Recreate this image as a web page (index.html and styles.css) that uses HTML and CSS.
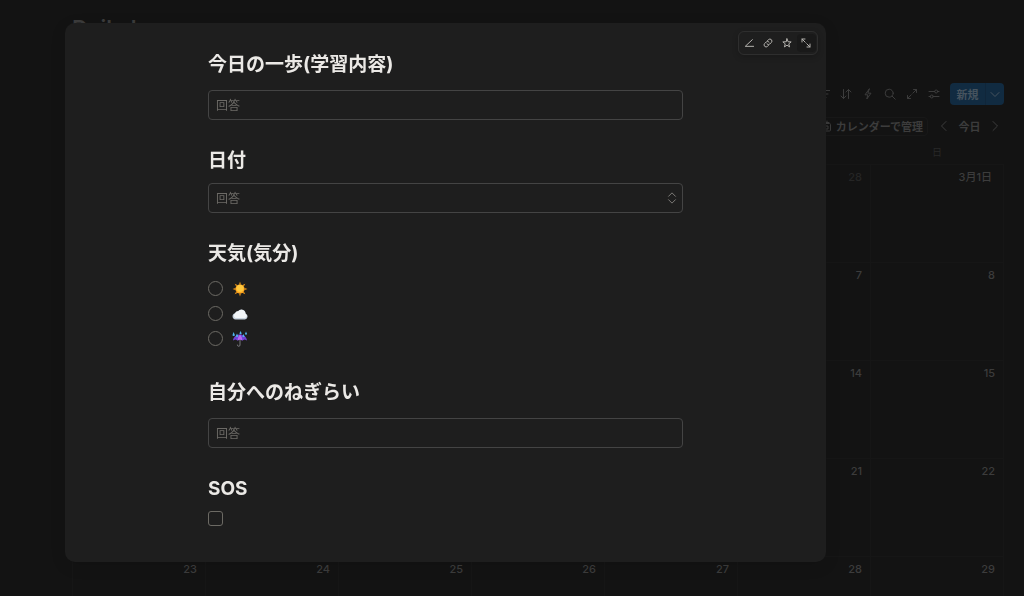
FILE: index.html
```html
<!DOCTYPE html>
<html lang="ja">
<head>
    <meta charset="UTF-8">
    <meta name="viewport" content="width=device-width, initial-scale=1.0">
    <title>Daily log</title>
    <link rel="stylesheet" href="styles.css">
</head>
<body>
    <!-- Calendar page -->
    <main class="page">
        <h1 class="page-title">Daily log</h1>

        <div class="toolbar">
            <button class="tool" aria-label="フィルター">
                <svg viewBox="0 0 12 12"><path d="M0 2.5h12M2 6h8M4 9.5h4"/></svg>
            </button>
            <button class="tool" aria-label="並べ替え">
                <svg viewBox="0 0 12 12"><path d="M3.5 1.5v9M1 8l2.5 2.5L6 8M8.5 10.5v-9M6 4l2.5-2.5L11 4"/></svg>
            </button>
            <button class="tool" aria-label="オートメーション">
                <svg viewBox="0 0 12 12"><path d="M7.2 1L3 6.8h2.800L4.800 11 9 5.200H6.200z"/></svg>
            </button>
            <button class="tool" aria-label="検索">
                <svg viewBox="0 0 12 12"><circle cx="5.2" cy="5.2" r="4"/><path d="M8.200 8.200l3 3"/></svg>
            </button>
            <button class="tool" aria-label="全画面">
                <svg viewBox="0 0 12 12"><path d="M7.500 1.500h3v3M10.500 1.500l-3.700 3.700M4.500 10.500h-3v-3M1.500 10.500l3.700-3.700"/></svg>
            </button>
            <button class="tool" aria-label="設定">
                <svg viewBox="0 0 12 12"><path d="M1 3.500h5.700M9.700 3.500H11M1 8.500h1.300M5.300 8.500H11"/><circle cx="8.2" cy="3.5" r="1.5"/><circle cx="3.8" cy="8.5" r="1.5"/></svg>
            </button>
            <div class="new-group">
                <button class="new-btn">新規</button>
                <button class="new-more" aria-label="その他">
                    <svg viewBox="0 0 12 12"><path d="M2 4.500l4 4 4-4"/></svg>
                </button>
            </div>
        </div>

        <div class="month-bar">
            <button class="manage-btn">
                <svg viewBox="0 0 12 12"><rect x="2.5" y="3.5" width="8" height="7.5" rx="1"/><path d="M1 9V2.500h8M4 1v1.500M7 1v1.500M5 6h3v3H5z"/></svg>
                カレンダーで管理
            </button>
            <button class="step" aria-label="前の月">
                <svg viewBox="0 0 12 12"><path d="M8 1.500L3.500 6 8 10.500"/></svg>
            </button>
            <button class="today-btn">今日</button>
            <button class="step" aria-label="次の月">
                <svg viewBox="0 0 12 12"><path d="M4 1.500L8.500 6 4 10.500"/></svg>
            </button>
        </div>

        <table class="calendar">
            <thead>
                <tr><th>月</th><th>火</th><th>水</th><th>木</th><th>金</th><th>土</th><th>日</th></tr>
            </thead>
            <tbody>
                <tr><td class="other">23</td><td class="other">24</td><td class="other">25</td><td class="other">26</td><td class="other">27</td><td class="other">28</td><td class="first">3月1日</td></tr>
                <tr><td>2</td><td>3</td><td>4</td><td>5</td><td>6</td><td>7</td><td>8</td></tr>
                <tr><td>9</td><td>10</td><td>11</td><td>12</td><td>13</td><td>14</td><td>15</td></tr>
                <tr><td>16</td><td>17</td><td>18</td><td>19</td><td>20</td><td>21</td><td>22</td></tr>
                <tr><td>23</td><td>24</td><td>25</td><td>26</td><td>27</td><td>28</td><td>29</td></tr>
            </tbody>
        </table>
    </main>

    <!-- Form dialog -->
    <div class="overlay">
        <div class="modal" role="dialog" aria-label="フォーム">
            <div class="modal-tools">
                <button aria-label="編集">
                    <svg viewBox="0 0 12 12"><path d="M10 2L1.500 10H11.500"/></svg>
                </button>
                <button aria-label="リンクをコピー">
                    <svg viewBox="0 0 12 12"><path d="M5.300 3.300l1.300-1.300a2.400 2.400 0 0 1 3.400 3.400L8.200 7.200a2.400 2.400 0 0 1-3.400 0M6.700 8.700l-1.300 1.300a2.400 2.400 0 0 1-3.400-3.400L3.800 4.800a2.400 2.400 0 0 1 3.400 0"/></svg>
                </button>
                <button aria-label="お気に入り">
                    <svg viewBox="0 0 12 12"><path d="M6 1l1.300 3.500 3.700.2-2.900 2.300 1 3.700L6 8.600l-3.100 2.100 1-3.700L1 4.700l3.700-.2z"/></svg>
                </button>
                <button class="active" aria-label="全画面で開く">
                    <svg viewBox="0 0 12 12"><path d="M1.200 4.800V1.200h3.600M1.200 1.200l3.900 3.900M10.800 7.200v3.600H7.200M10.800 10.800L6.900 6.900"/></svg>
                </button>
            </div>

            <form class="form">
                <div class="field">
                    <label class="question" for="step">今日の一歩(学習内容)</label>
                    <input class="answer" type="text" id="step" placeholder="回答">
                </div>

                <div class="field compact">
                    <label class="question" for="date">日付</label>
                    <div class="select-wrap">
                        <select class="answer" id="date">
                            <option>回答</option>
                        </select>
                        <svg class="select-icon" viewBox="0 0 10 14"><path d="M1 5l4-4 4 4M1 9l4 4 4-4"/></svg>
                    </div>
                </div>

                <fieldset class="field compact weather">
                    <legend class="question">天気(気分)</legend>
                    <label class="choice">
                        <input type="radio" name="weather" aria-label="晴れ">
                        <svg viewBox="0 0 16 16">
                            <path fill="#f59a16" d="M8 .5l.9 3H7.100zM8 15.500l.9-3H7.100zM.5 8l3-.9v1.800zM15.500 8l-3-.9v1.800zM2.700 2.700l2.600 1.400-1.200 1.200zM13.300 2.700l-2.600 1.400 1.200 1.200zM2.700 13.300l2.600-1.400-1.200-1.200zM13.300 13.300l-2.600-1.400 1.200-1.200z"/>
                            <circle cx="8" cy="8" r="4.6" fill="#ffa51f"/>
                            <circle cx="8" cy="7.3" r="3.6" fill="#ffc83d"/>
                        </svg>
                    </label>
                    <label class="choice">
                        <input type="radio" name="weather" aria-label="くもり">
                        <svg viewBox="0 0 16 16">
                            <path fill="#c8d3de" d="M3.500 13.500a3.200 3.200 0 0 1-.5-6.300 3 3 0 0 1 3-2 4.200 4.200 0 0 1 7.600 2.500 3 3 0 0 1-.6 5.800z"/>
                            <path fill="#f2f5f8" d="M3.500 12a2.700 2.700 0 0 1-.3-4.800 3 3 0 0 1 3-2 4.200 4.200 0 0 1 7.400 2.500 2.300 2.300 0 0 1-.6 4.300z"/>
                        </svg>
                    </label>
                    <label class="choice">
                        <input type="radio" name="weather" aria-label="雨">
                        <svg viewBox="0 0 16 16">
                            <path fill="none" stroke="#77777c" d="M8 8v6a1.300 1.300 0 0 1-2.600 0"/>
                            <path fill="#7142d6" d="M1 9.500C1.500 5.800 4.500 3.600 8 3.600s6.500 2.200 7 5.900l-2.300-.9-2.300.9L8 8.600l-2.400.9-2.300-.9z"/>
                            <path fill="#b667f0" d="M5.600 9.500C5.800 6.500 7 4.200 8 3.800c1 .4 2.200 2.700 2.400 5.700L8 8.600z"/>
                            <path fill="#4fb5ee" d="M1.500 1l1.200 2.500a1.100 1.100 0 1 1-2 0zM8.500 0l1 2a1 1 0 1 1-1.900 0zM14 .5l1 2.200a1 1 0 1 1-2 0zM5 2.500l.9 2a1 1 0 1 1-1.800 0zM11.500 3l.8 1.800a.9.9 0 1 1-1.600 0z"/>
                        </svg>
                    </label>
                </fieldset>

                <div class="field">
                    <label class="question" for="praise">自分へのねぎらい</label>
                    <input class="answer" type="text" id="praise" placeholder="回答">
                </div>

                <div class="field compact">
                    <label class="question" for="sos">SOS</label>
                    <input class="check" type="checkbox" id="sos">
                </div>
            </form>
        </div>
    </div>
</body>
</html>
```
FILE: styles.css
```css
/* Base Styles */
* {
    margin: 0;
    padding: 0;
    box-sizing: border-box;
}
body {
    height: 100vh;
    overflow: hidden;
    background-color: #131313;
    color: #3c3c3c;
    font-family: Inter, "Noto Sans CJK JP", sans-serif;
    font-size: 11px;
}
button {
    border: none;
    background: none;
    color: inherit;
    font: inherit;
    cursor: pointer;
}
svg {
    display: block;
    width: 12px;
    height: 12px;
    fill: none;
    stroke: currentColor;
    stroke-linecap: round;
    stroke-linejoin: round;
}
/* Calendar page */
.page {
    height: 100vh;
    padding: 12px 20px 0 72px;
    overflow: hidden;
}
.page-title {
    height: 71px;
    font-size: 22px;
    line-height: 32px;
    font-weight: 600;
}
.toolbar {
    display: flex;
    justify-content: flex-end;
    align-items: center;
    height: 22px;
}
.tool {
    width: 22px;
    height: 22px;
    padding: 5px;
}
.new-group {
    display: flex;
    margin-left: 5px;
    border-radius: 4px;
    overflow: hidden;
    background-color: #112b41;
    color: #46535e;
}
.new-btn {
    width: 35px;
    height: 22px;
    font-weight: 700;
}
.new-more {
    width: 19px;
    padding-left: 3px;
    border-left: 1px solid #10263a;
}
.month-bar {
    display: flex;
    justify-content: flex-end;
    align-items: center;
    height: 42px;
    padding-right: 3px;
    font-weight: 700;
}
.manage-btn {
    display: flex;
    align-items: center;
    gap: 4px;
    height: 19px;
    margin-right: 10px;
    padding: 0 4px;
    border: 1px solid #181818;
    border-radius: 4px;
}
.today-btn {
    width: 39px;
}
/* Calendar grid */
.calendar {
    width: 100%;
    table-layout: fixed;
    border-collapse: collapse;
}
.calendar th {
    height: 17px;
    color: #282828;
    font-size: 10px;
    line-height: 10px;
    font-weight: 400;
    vertical-align: top;
}
.calendar td {
    height: 98px;
    padding: 4px 8px;
    border: 1px solid #161616;
    line-height: 16px;
    font-weight: 500;
    text-align: right;
    vertical-align: top;
}
.calendar .other {
    color: #252525;
}
.calendar .first {
    padding-right: 11px;
}
/* Form dialog */
.overlay {
    position: fixed;
    inset: 0;
    padding: 23px 198px 34px 65px;
}
.modal {
    position: relative;
    height: 100%;
    padding: 27px 143px 0;
    border-radius: 10px;
    background-color: #1e1e1e;
    box-shadow: 0 4px 16px rgba(0, 0, 0, 0.1);
}
.modal-tools {
    position: absolute;
    top: 8px;
    right: 8px;
    display: flex;
    padding: 2px 1px;
    border: 1px solid #2e2e2e;
    border-radius: 6px;
    color: #b4b2ae;
    box-shadow: 0 2px 6px rgba(0, 0, 0, 0.2);
}
.modal-tools button {
    width: 19px;
    height: 18px;
    padding: 4px;
    border-radius: 4px;
}
.modal-tools svg {
    width: 10px;
    height: 10px;
    stroke-width: 1.2;
}
.modal-tools .active {
    background-color: #191919;
}
/* Form fields */
.form {
    display: flex;
    flex-direction: column;
    gap: 26px;
}
.field {
    border: none;
}
.question {
    display: block;
    margin-bottom: 10px;
    color: #ebe9e6;
    font-size: 19px;
    line-height: 30px;
    font-weight: 700;
}
.compact .question {
    margin-bottom: 7px;
}
.answer {
    display: block;
    width: 100%;
    height: 30px;
    padding: 0 7px;
    border: 1px solid #444;
    border-radius: 4px;
    background: none;
    color: #6c6a66;
    font-family: inherit;
    font-size: 12px;
}
.answer::placeholder {
    color: #6c6a66;
}
select.answer {
    appearance: none;
}
.select-wrap {
    position: relative;
}
.select-icon {
    position: absolute;
    top: 9px;
    right: 6px;
    width: 10px;
    height: 12px;
    color: #8c8a86;
    pointer-events: none;
}
.weather {
    padding-bottom: 1px;
}
.choice {
    display: flex;
    align-items: center;
    gap: 9px;
    height: 25px;
}
.choice svg {
    width: 16px;
    height: 16px;
    stroke: none;
}
.choice input, .check {
    display: block;
    appearance: none;
    width: 15px;
    height: 15px;
    border: 1px solid #6c6a64;
}
.choice input {
    border-radius: 50%;
}
.check {
    border-radius: 3px;
}
```
